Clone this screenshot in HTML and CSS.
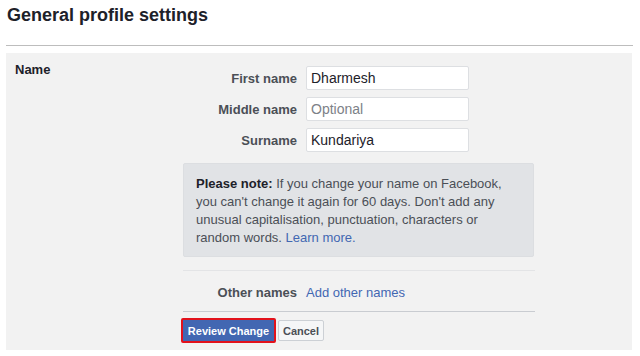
FILE: index.html
```html
<!DOCTYPE html>
<html>
<head>
<meta charset="utf-8">
<link rel="stylesheet" href="styles.css">
</head>
<body>
<div class="page">
  <h1 class="title">General profile settings</h1>
  <div class="rule"></div>
  <div class="panel">
    <div class="section-label">Name</div>
    <div class="form">
      <div class="field">
        <label class="field-label">First name</label>
        <input class="field-input" type="text" value="Dharmesh">
      </div>
      <div class="field">
        <label class="field-label">Middle name</label>
        <input class="field-input" type="text" placeholder="Optional">
      </div>
      <div class="field">
        <label class="field-label">Surname</label>
        <input class="field-input" type="text" value="Kundariya">
      </div>
      <div class="note">
        <b>Please note:</b> If you change your name on Facebook, you can't change it again for 60 days. Don't add any unusual capitalisation, punctuation, characters or random words. <a class="link" href="#">Learn more.</a>
      </div>
      <div class="divider light"></div>
      <div class="field other">
        <span class="field-label">Other names</span>
        <a class="link big" href="#">Add other names</a>
      </div>
      <div class="divider dark"></div>
      <div class="actions">
        <button class="btn primary">Review Change</button>
        <button class="btn secondary">Cancel</button>
      </div>
    </div>
  </div>
</div>
</body>
</html>
```

FILE: styles.css
```css
html, body {
  margin: 0;
  padding: 0;
  background: #ffffff;
}
body {
  font-family: "Liberation Sans", Arial, sans-serif;
  color: #1d2129;
  width: 640px;
  height: 356px;
  overflow: hidden;
}
.page {
  padding: 0 7px 0 6px;
}
.title {
  margin: 0;
  padding: 4px 0 0 1px;
  font-size: 18px;
  line-height: 22px;
  font-weight: bold;
  color: #1d2129;
}
.rule {
  margin-top: 19px;
  height: 1px;
  background: #bdbdbd;
}
.panel {
  margin-top: 7px;
  width: 626px;
  background: #f2f2f2;
  display: flex;
  padding: 9px 0 7px 0;
}
.section-label {
  width: 177px;
  padding-left: 9px;
  box-sizing: border-box;
  font-size: 13px;
  line-height: 16px;
  font-weight: bold;
  color: #1d2129;
}
.form {
  width: 352px;
  padding-top: 4px;
  display: flex;
  flex-direction: column;
}
.field {
  display: flex;
  align-items: center;
  margin-bottom: 7px;
}
.field-label {
  width: 114px;
  margin-right: 9px;
  text-align: right;
  font-size: 13px;
  font-weight: bold;
  color: #4b4f56;
}
.field-input {
  width: 163px;
  height: 24px;
  box-sizing: border-box;
  border: 1px solid #dddfe2;
  border-radius: 2px;
  background: #ffffff;
  padding: 0 4px 0 4px;
  font-family: "Liberation Sans", Arial, sans-serif;
  font-size: 14px;
  color: #1d2129;
  outline: none;
}
.field-input::placeholder {
  color: #7d8187;
}
.note {
  margin-top: 4px;
  width: 351px;
  box-sizing: border-box;
  padding: 11px 12px 9px 12px;
  background: #e1e3e6;
  border: 1px solid #dcdee1;
  border-radius: 2px;
  font-size: 13px;
  line-height: 18px;
  color: #4b4f56;
}
.note b {
  color: #1d2129;
}
.link {
  color: #4267b2;
  text-decoration: none;
}
.link.big {
  font-size: 13px;
}
.divider {
  height: 1px;
  width: 352px;
}
.divider.light {
  margin-top: 13px;
  background: #e3e4e6;
}
.divider.dark {
  background: #c9ccd1;
}
.other {
  height: 40px;
  margin: 0;
  padding-top: 3px;
  box-sizing: border-box;
}
.actions {
  display: flex;
  align-items: center;
  margin-top: 6px;
  margin-left: -2px;
}
.btn {
  font-family: "Liberation Sans", Arial, sans-serif;
  font-size: 11px;
  font-weight: bold;
  border-radius: 2px;
  cursor: pointer;
}
.btn.primary {
  width: 95px;
  height: 25px;
  background: #4267b2;
  color: #ffffff;
  border: 2px solid #e2121c;
  padding: 0;
}
.btn.secondary {
  margin-left: 2px;
  width: 46px;
  height: 21px;
  background: #f5f6f7;
  color: #4b4f56;
  border: 1px solid #ccd0d5;
  padding: 0;
}
```
